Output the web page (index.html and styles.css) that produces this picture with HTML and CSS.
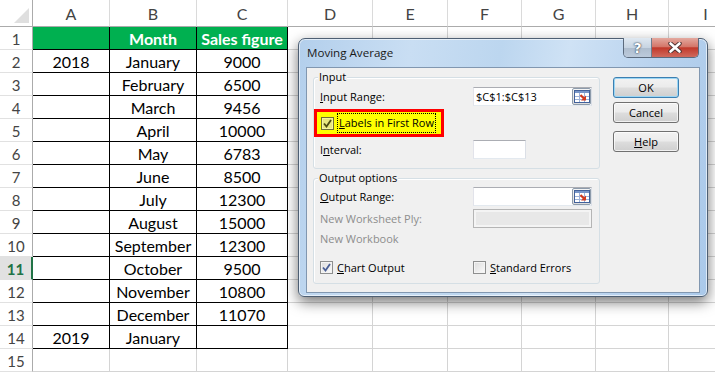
FILE: index.html
```html
<!DOCTYPE html>
<html>
<head>
<meta charset="utf-8">
<title>Moving Average</title>
<link rel="stylesheet" href="styles.css">
</head>
<body>
<div class="sheet">
  <div class="corner"><div class="tri"></div></div>
  <div class="ch">A</div><div class="ch">B</div><div class="ch">C</div><div class="ch">D</div><div class="ch">E</div><div class="ch">F</div><div class="ch">G</div><div class="ch">H</div><div class="ch">I</div>

  <div class="rh">1</div><div class="t g"></div><div class="t g">Month</div><div class="t g">Sales figure</div><div></div><div></div><div></div><div></div><div></div><div></div>
  <div class="rh">2</div><div class="t">2018</div><div class="t">January</div><div class="t">9000</div><div></div><div></div><div></div><div></div><div></div><div></div>
  <div class="rh">3</div><div class="t"></div><div class="t">February</div><div class="t">6500</div><div></div><div></div><div></div><div></div><div></div><div></div>
  <div class="rh">4</div><div class="t"></div><div class="t">March</div><div class="t">9456</div><div></div><div></div><div></div><div></div><div></div><div></div>
  <div class="rh">5</div><div class="t"></div><div class="t">April</div><div class="t">10000</div><div></div><div></div><div></div><div></div><div></div><div></div>
  <div class="rh">6</div><div class="t"></div><div class="t">May</div><div class="t">6783</div><div></div><div></div><div></div><div></div><div></div><div></div>
  <div class="rh">7</div><div class="t"></div><div class="t">June</div><div class="t">8500</div><div></div><div></div><div></div><div></div><div></div><div></div>
  <div class="rh">8</div><div class="t"></div><div class="t">July</div><div class="t">12300</div><div></div><div></div><div></div><div></div><div></div><div></div>
  <div class="rh">9</div><div class="t"></div><div class="t">August</div><div class="t">15000</div><div></div><div></div><div></div><div></div><div></div><div></div>
  <div class="rh">10</div><div class="t"></div><div class="t">September</div><div class="t">12300</div><div></div><div></div><div></div><div></div><div></div><div></div>
  <div class="rh sel">11</div><div class="t"></div><div class="t">October</div><div class="t">9500</div><div></div><div></div><div></div><div></div><div></div><div></div>
  <div class="rh">12</div><div class="t"></div><div class="t">November</div><div class="t">10800</div><div></div><div></div><div></div><div></div><div></div><div></div>
  <div class="rh">13</div><div class="t"></div><div class="t">December</div><div class="t">11070</div><div></div><div></div><div></div><div></div><div></div><div></div>
  <div class="rh">14</div><div class="t">2019</div><div class="t">January</div><div class="t"></div><div></div><div></div><div></div><div></div><div></div><div></div>
  <div class="rh">15</div><div></div><div></div><div></div><div></div><div></div><div></div><div></div><div></div><div></div>
</div>

<div class="dialog">
  <div class="titlebar">
    <span class="title">Moving Average</span>
    <div class="capbtns">
      <div class="cap cap-help">?</div>
      <div class="cap cap-close">
        <svg width="14" height="11" viewBox="0 0 14 11"><path d="M2.5 1.5 L11.5 9.5 M11.5 1.5 L2.5 9.5" stroke="#4a3030" stroke-width="4.4" stroke-linecap="round"/><path d="M2.5 1.5 L11.5 9.5 M11.5 1.5 L2.5 9.5" stroke="#fff" stroke-width="2.6" stroke-linecap="round"/></svg>
      </div>
    </div>
  </div>
  <div class="client">
    <div class="groups">
      <div class="group g-in">
        <span class="legend">Input</span>
        <div class="frow">
          <span class="lbl"><u>I</u>nput Range:</span>
          <div class="box refbox"><span class="val">$C$1:$C$13</span>
            <span class="refbtn"><svg width="16" height="13" viewBox="0 0 16 13"><rect x="0.5" y="0.5" width="15" height="12" fill="#fff" stroke="#42619a"/><rect x="1" y="1" width="14" height="2" fill="#7795c9"/><path d="M1 6.5H15M1 9.5H15M5.5 3V12M10.5 3V12" stroke="#9db3db"/><path d="M6.5 5 L11 9.5" stroke="#d23a1e" stroke-width="2.2"/><path d="M12 5.5 V10.5 H7 Z" fill="#d23a1e"/></svg></span>
          </div>
        </div>
        <div class="hl">
          <span class="cb cb-hl"><svg width="11" height="11" viewBox="0 0 11 11"><path d="M2 5.5 L4.5 8.5 L9 2" stroke="#4b4b10" stroke-width="1.8" fill="none"/></svg></span>
          <span class="focus"><u>L</u>abels in First Row</span>
        </div>
        <div class="frow">
          <span class="lbl">I<u>n</u>terval:</span>
          <div class="box small"></div>
        </div>
      </div>
      <div class="group g-out">
        <span class="legend">Output options</span>
        <div class="frow">
          <span class="lbl"><u>O</u>utput Range:</span>
          <div class="box refbox"><span class="val"></span>
            <span class="refbtn"><svg width="16" height="13" viewBox="0 0 16 13"><rect x="0.5" y="0.5" width="15" height="12" fill="#fff" stroke="#42619a"/><rect x="1" y="1" width="14" height="2" fill="#7795c9"/><path d="M1 6.5H15M1 9.5H15M5.5 3V12M10.5 3V12" stroke="#9db3db"/><path d="M6.5 5 L11 9.5" stroke="#d23a1e" stroke-width="2.2"/><path d="M12 5.5 V10.5 H7 Z" fill="#d23a1e"/></svg></span>
          </div>
        </div>
        <div class="frow">
          <span class="lbl dis">New Worksheet Ply:</span>
          <div class="box disabled"></div>
        </div>
        <div class="frow wb">
          <span class="lbl dis">New Workbook</span>
        </div>
        <div class="frow checks">
          <span class="lbl"><span class="cb"><svg width="11" height="11" viewBox="0 0 11 11"><path d="M2 5.5 L4.5 8.5 L9 2" stroke="#4a5f96" stroke-width="1.8" fill="none"/></svg></span><span><u>C</u>hart Output</span></span>
          <span class="chk2"><span class="cb"></span><span><u>S</u>tandard Errors</span></span>
        </div>
      </div>
    </div>
    <div class="buttons">
      <div class="btn ok">OK</div>
      <div class="btn cancel">Cancel</div>
      <div class="btn help"><u>H</u>elp</div>
    </div>
  </div>
</div>
</body>
</html>
```

FILE: styles.css
```css
body {
  margin: 0;
  width: 715px;
  height: 372px;
  overflow: hidden;
  position: relative;
  background: #fff;
  font-family: Lato, "Liberation Sans", sans-serif;
}

.sheet {
  display: grid;
  grid-template-columns: 33px 77px 87px 91px 85px 75px 74px 74px 73px 74px;
  grid-template-rows: 27px repeat(15, 23px);
}

.sheet > div {
  box-sizing: border-box;
  border-right: 1px solid #d4d4d4;
  border-bottom: 1px solid #d4d4d4;
  display: flex;
  align-items: center;
  justify-content: center;
  font-size: 16px;
  color: #000;
  white-space: nowrap;
  overflow: hidden;
  padding-top: 1px;
}

.sheet > .corner {
  border-right: 1px solid #ababab;
  border-bottom: 1px solid #ababab;
  justify-content: flex-end;
  align-items: flex-end;
  padding: 0 3px 3px 0;
}

.tri {
  width: 15px;
  height: 15px;
  background: #dfdfdf;
  clip-path: polygon(100% 0, 100% 100%, 0 100%);
}

.sheet > .ch {
  color: #444;
  border-bottom: 1px solid #ababab;
  border-right: 1px solid #dadada;
  font-size: 16px;
}

.sheet > .rh {
  color: #444;
  border-right: 1px solid #ababab;
  border-bottom: 1px solid #e1e1e1;
  font-size: 15px;
}

.sheet > .rh.sel {
  background: #e1e1e1;
  color: #217346;
  font-weight: bold;
  border-right: 2px solid #217346;
}

.sheet > .t {
  border-right: 1px solid #000;
  border-bottom: 1px solid #000;
}

.sheet > .g {
  background: #00b050;
  color: #fff;
  font-weight: bold;
}

/* Dialog */
.dialog {
  position: absolute;
  left: 298px;
  top: 38px;
  width: 410px;
  height: 259px;
  box-sizing: border-box;
  border: 1px solid #4e5f73;
  border-radius: 7px 7px 6px 6px;
  background: linear-gradient(100deg, #b3cfec 0%, #c9def3 25%, #bcd6ef 45%, #cfe2f5 60%, #b8d2ee 80%, #aac9ea 100%);
  box-shadow: 0 5px 14px rgba(0,0,0,0.55), inset 0 0 0 1px rgba(255,255,255,0.6);
  font-family: "Open Sans", "Noto Sans", sans-serif;
  font-size: 11px;
  color: #000;
  display: flex;
  flex-direction: column;
}

.titlebar {
  height: 28px;
  display: flex;
  align-items: flex-start;
}

.title {
  font-size: 11.6px;
  padding: 6px 0 0 8px;
  color: #1a1a1a;
}

.capbtns {
  margin-left: auto;
  margin-right: 8px;
  margin-top: -1px;
  display: flex;
  height: 19px;
  border: 1px solid #5b6a7d;
  border-top: none;
  border-radius: 0 0 5px 5px;
  overflow: hidden;
}

.cap {
  height: 19px;
  display: flex;
  align-items: center;
  justify-content: center;
}

.cap-help {
  width: 27px;
  border-right: 1px solid #6f7d8e;
  background: linear-gradient(180deg, #dfe8f1 0%, #c7d4e2 50%, #aebdce 52%, #bccadb 100%);
  color: #fff;
  font-weight: bold;
  font-size: 14px;
  font-family: "DejaVu Sans", sans-serif;
  text-shadow: 0 0 2px #2c3a4c, 0 0 1px #2c3a4c;
}

.cap-close {
  width: 46px;
  background: linear-gradient(180deg, #e3a99f 0%, #d4776a 45%, #c1392b 52%, #d06a5d 100%);
}

.client {
  margin: 0 7px;
  height: 226px;
  box-sizing: border-box;
  border: 1px solid #8197b0;
  background: #f0f0f0;
  padding: 9px 0 0 6px;
  display: flex;
  gap: 13px;
}

.groups {
  width: 287px;
  display: flex;
  flex-direction: column;
  gap: 9px;
}

.group {
  position: relative;
  box-sizing: border-box;
  border: 1px solid #d5dfe5;
  border-radius: 3px;
  box-shadow: inset 1px 1px 0 #fff;
}

.g-in {
  height: 92px;
  padding: 9px 0 9px 0;
}

.g-out {
  height: 106px;
  padding: 8px 0 5px 0;
}

.legend {
  position: absolute;
  left: 4px;
  top: -9px;
  padding: 0 1px;
  background: #f0f0f0;
  line-height: 16px;
}

.frow {
  height: 19px;
  display: flex;
  align-items: center;
  padding-left: 6px;
  margin-bottom: 3px;
}

.lbl {
  width: 153px;
  flex: none;
  display: flex;
  align-items: center;
}

.dis {
  color: #8d8d8d;
}

.box {
  box-sizing: border-box;
  height: 19px;
  background: #fff;
  border: 1px solid #abadb3;
  border-color: #abadb3 #dbdfe6 #e3e9ef #e2e3ea;
}

.refbox {
  width: 119px;
  display: flex;
  align-items: center;
}

.val {
  flex: 1;
  padding-left: 2px;
}

.refbtn {
  width: 19px;
  height: 17px;
  box-sizing: border-box;
  border: 1px solid #8d9bab;
  border-radius: 2px;
  background: linear-gradient(180deg, #f6f6f6, #dcdcdc);
  display: flex;
  align-items: center;
  justify-content: center;
}

.small {
  width: 53px;
}

.disabled {
  width: 119px;
  background: #e8e8e8;
  border: 1px solid #b5b5b5;
  box-shadow: inset 0 0 0 2px #f4f4f4;
}

.hl {
  box-sizing: border-box;
  width: 130px;
  height: 28px;
  margin: 0 0 3px 0;
  border: 3px solid #ff0000;
  background: #ffff00;
  display: flex;
  align-items: center;
  padding-left: 4px;
  gap: 3px;
}

.cb {
  box-sizing: border-box;
  width: 13px;
  height: 13px;
  flex: none;
  border: 1px solid #8e8f8f;
  background: linear-gradient(135deg, #dcdcdc, #fbfbfb);
  box-shadow: inset 0 0 0 1px #f4f4f4;
  display: inline-flex;
  align-items: center;
  justify-content: center;
  margin-right: 4px;
}

.cb-hl {
  border-color: #6d6d36;
  background: #e6e680;
  box-shadow: inset 0 0 0 1px #f5f5a0;
  margin-right: 0;
}

.focus {
  border: 1px dotted #000;
  padding: 1px 1px 2px 1px;
  line-height: 15px;
}

.wb {
  height: 20px;
  margin-top: -3px;
  margin-bottom: 0;
}

.checks {
  margin-top: 10px;
}

.chk2 {
  display: flex;
  align-items: center;
}

.buttons {
  width: 66px;
  display: flex;
  flex-direction: column;
}

.btn {
  box-sizing: border-box;
  height: 21px;
  border: 1px solid #707070;
  border-radius: 3px;
  background: linear-gradient(180deg, #f2f2f2 0%, #ebebeb 48%, #dddddd 52%, #cfcfcf 100%);
  display: flex;
  align-items: center;
  justify-content: center;
  box-shadow: inset 0 0 0 1px rgba(255,255,255,0.7);
}

.ok {
  border-color: #3c7fb1;
  box-shadow: inset 0 0 0 1px #9ad6f5;
}

.cancel {
  margin-top: 4px;
}

.help {
  margin-top: 8px;
}
```
